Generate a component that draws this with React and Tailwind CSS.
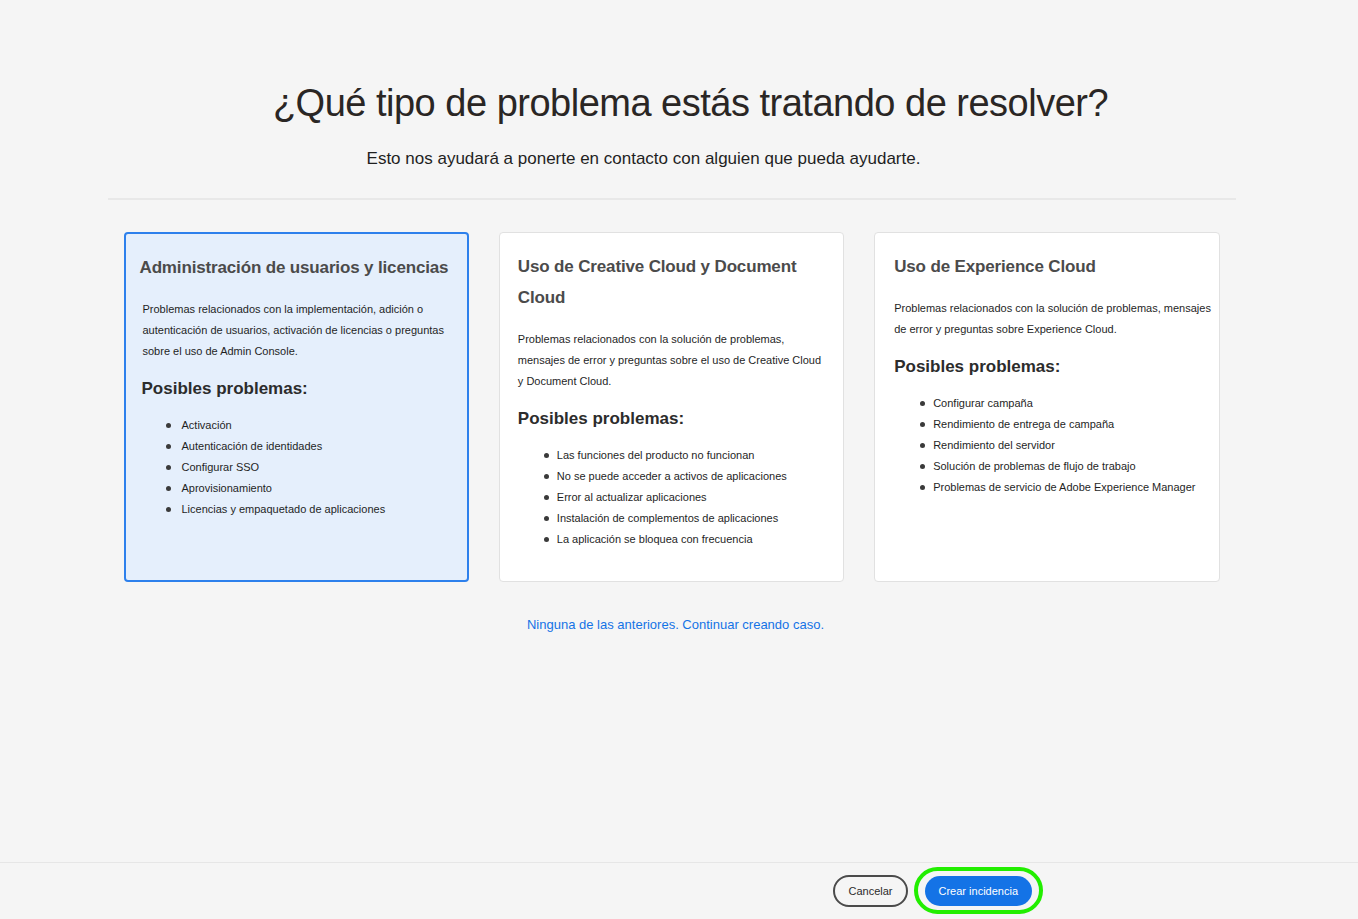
import React from 'react';

const cards = [
  {
    title: 'Administración de usuarios y licencias',
    desc: 'Problemas relacionados con la implementación, adición o autenticación de usuarios, activación de licencias o preguntas sobre el uso de Admin Console.',
    items: [
      'Activación',
      'Autenticación de identidades',
      'Configurar SSO',
      'Aprovisionamiento',
      'Licencias y empaquetado de aplicaciones',
    ],
    selected: true,
    pad: 'pl-[14px] pr-[8px]',
  },
  {
    title: 'Uso de Creative Cloud y Document Cloud',
    desc: 'Problemas relacionados con la solución de problemas, mensajes de error y preguntas sobre el uso de Creative Cloud y Document Cloud.',
    items: [
      'Las funciones del producto no funcionan',
      'No se puede acceder a activos de aplicaciones',
      'Error al actualizar aplicaciones',
      'Instalación de complementos de aplicaciones',
      'La aplicación se bloquea con frecuencia',
    ],
    pad: 'pl-[18px] pr-[18px]',
  },
  {
    title: 'Uso de Experience Cloud',
    desc: 'Problemas relacionados con la solución de problemas, mensajes de error y preguntas sobre Experience Cloud.',
    items: [
      'Configurar campaña',
      'Rendimiento de entrega de campaña',
      'Rendimiento del servidor',
      'Solución de problemas de flujo de trabajo',
      'Problemas de servicio de Adobe Experience Manager',
    ],
    pad: 'pl-[19px] pr-[6px]',
  },
];

const Card = ({ title, desc, items, selected, pad }) => (
  <div
    className={`h-[350px] rounded-[4px] pt-[18px] ${pad} ${
      selected ? 'border-2 border-[#2d80ec] bg-[#e5effc]' : 'border border-[#e1e1e1] bg-white'
    }`}
  >
    <h3 className="text-[17px] leading-[31px] font-bold text-[#4b4b4b] tracking-[-0.15px] pr-[4px]">{title}</h3>
    <p className={`mt-[16px] text-[11px] leading-[21px] text-[#1f1f1f] ${selected ? 'pl-[3px]' : ''}`}>{desc}</p>
    <h4 className={`mt-[16px] text-[17px] leading-[22px] font-bold text-[#2c2c2c] ${selected ? 'pl-[2px]' : ''}`}>
      Posibles problemas:
    </h4>
    <ul className="mt-[15px] pl-[26px]">
      {items.map((item) => (
        <li key={item} className="flex items-center text-[11px] leading-[21px] text-[#1f1f1f]">
          <span className={`w-[5px] h-[5px] rounded-full bg-[#3a3a3a] shrink-0 ${selected ? 'mr-[11px]' : 'mr-[8px]'}`} />
          {item}
        </li>
      ))}
    </ul>
  </div>
);

export default function App() {
  return (
    <div
      className="min-h-screen flex flex-col bg-[#f5f5f5]"
      style={{ fontFamily: '"Liberation Sans", Arial, sans-serif' }}
    >
      <div className="flex-1 pr-[15px]">
        <div className="w-[1128px] mx-auto pt-[80px]">
          <h1 className="text-center pl-[38px] text-[38px] leading-[46px] text-[#2a2624] tracking-[-0.5px]">
            ¿Qué tipo de problema estás tratando de resolver?
          </h1>
          <p className="text-center pr-[56px] mt-[21px] text-[17px] leading-[24px] text-[#1f1f1f]">
            Esto nos ayudará a ponerte en contacto con alguien que pueda ayudarte.
          </p>
          <div className="mt-[27px] border-t-2 border-[#e8e8e8]" />
          <div className="grid grid-cols-3 gap-[30px] px-[16px] mt-[32px]">
            {cards.map((c) => (
              <Card key={c.title} {...c} />
            ))}
          </div>
          <div className="text-center pl-[8px] mt-[30px]">
            <a className="text-[13px] text-[#1473e6] cursor-pointer">
              Ninguna de las anteriores. Continuar creando caso.
            </a>
          </div>
        </div>
      </div>
      <div className="h-[57px] border-t border-[#e6e6e6] flex items-center justify-end pr-[326px] gap-[17px]">
        <button className="h-[32px] px-[13px] rounded-full border-2 border-[#4b4b4b] text-[11px] text-[#2c2c2c] bg-transparent">
          Cancelar
        </button>
        <div className="relative">
          <button className="h-[30px] px-[14px] rounded-full bg-[#1473e6] text-white text-[11px]">
            Crear incidencia
          </button>
          <div className="absolute -inset-x-[11px] -top-[9px] -bottom-[8px] rounded-full border-4 border-[#22ee00] pointer-events-none" />
        </div>
      </div>
    </div>
  );
}
